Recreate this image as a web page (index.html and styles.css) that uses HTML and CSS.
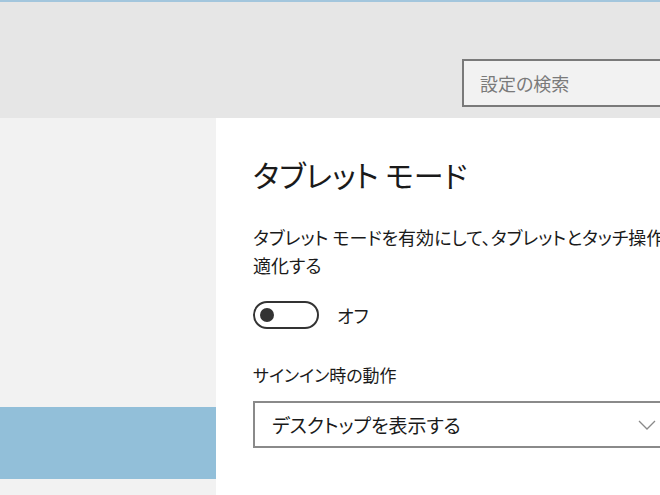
FILE: index.html
```html
<!DOCTYPE html>
<html lang="ja">
<head>
    <meta charset="UTF-8">
    <meta name="viewport" content="width=device-width, initial-scale=1.0">
    <title>設定</title>
    <link rel="stylesheet" href="styles.css">
</head>
<body>

<div class="window">
    <header class="header">
        <div class="search">設定の検索</div>
    </header>

    <div class="main">
        <nav class="sidebar">
            <div class="nav-item selected"></div>
        </nav>

        <section class="content">
            <h1>タブレット モード</h1>
            <p class="desc">タブレット モードを有効にして、タブレットとタッチ操作に最適化する</p>

            <div class="toggle-row">
                <span class="toggle"><span class="knob"></span></span>
                <span class="toggle-label">オフ</span>
            </div>

            <label class="field-label">サインイン時の動作</label>
            <div class="select">
                <span>デスクトップを表示する</span>
                <svg class="chevron" width="18" height="10" viewBox="0 0 18 10">
                    <path d="M1 1 L9 9 L17 1" fill="none" stroke="#8a8a8a" stroke-width="1.3"/>
                </svg>
            </div>
        </section>
    </div>
</div>

</body>
</html>
```

FILE: styles.css
```css
* {
    margin: 0;
    padding: 0;
    box-sizing: border-box;
    font-family: "Noto Sans CJK JP", "Noto Sans", sans-serif;
    font-feature-settings: "palt";
}

body {
    width: 660px;
    height: 495px;
    overflow: hidden;
    background-color: white;
}

.window {
    border-top: 2px solid #a3c6dd;
    height: 100%;
    display: flex;
    flex-direction: column;
}

.header {
    height: 116px;
    background-color: #e6e6e6;
    display: flex;
    align-items: flex-end;
    padding: 0 0 11px 462px;
}

.search {
    width: 240px;
    height: 48px;
    flex-shrink: 0;
    border: 2px solid #7a7a7a;
    background-color: #f2f2f2;
    color: #7a7a7a;
    font-size: 18px;
    line-height: 44px;
    padding-left: 16px;
}

.main {
    flex: 1;
    display: grid;
    grid-template-columns: 216px 1fr;
}

.sidebar {
    background-color: #f2f2f2;
    padding-top: 289px;
}

.nav-item {
    height: 72px;
}

.nav-item.selected {
    background-color: #92bfd9;
}

.content {
    padding: 36px 0 0 37px;
    color: #000;
    white-space: nowrap;
    overflow: hidden;
}

h1 {
    font-size: 30px;
    font-weight: normal;
    line-height: 40px;
    color: #1a1a1a;
}

.desc {
    margin-top: 29px;
    width: 450px;
    white-space: normal;
    font-size: 18px;
    line-height: 28px;
    color: #1a1a1a;
}

.toggle-row {
    margin-top: 22px;
    display: flex;
    align-items: center;
    gap: 18px;
}

.toggle {
    width: 66px;
    height: 28px;
    border: 2px solid #333;
    border-radius: 14px;
    display: flex;
    align-items: center;
    padding-left: 5px;
}

.knob {
    width: 14px;
    height: 14px;
    border-radius: 50%;
    background-color: #333;
}

.toggle-label {
    font-size: 18px;
    color: #1a1a1a;
}

.field-label {
    display: block;
    margin-top: 34px;
    font-size: 17px;
    line-height: 24px;
    color: #1a1a1a;
}

.select {
    margin-top: 14px;
    width: 430px;
    height: 47px;
    border: 2px solid #8a8a8a;
    display: flex;
    align-items: center;
    justify-content: space-between;
    padding: 0 0 0 17px;
    font-size: 19px;
    color: #1a1a1a;
}

.chevron {
    margin-right: 25px;
}
```
